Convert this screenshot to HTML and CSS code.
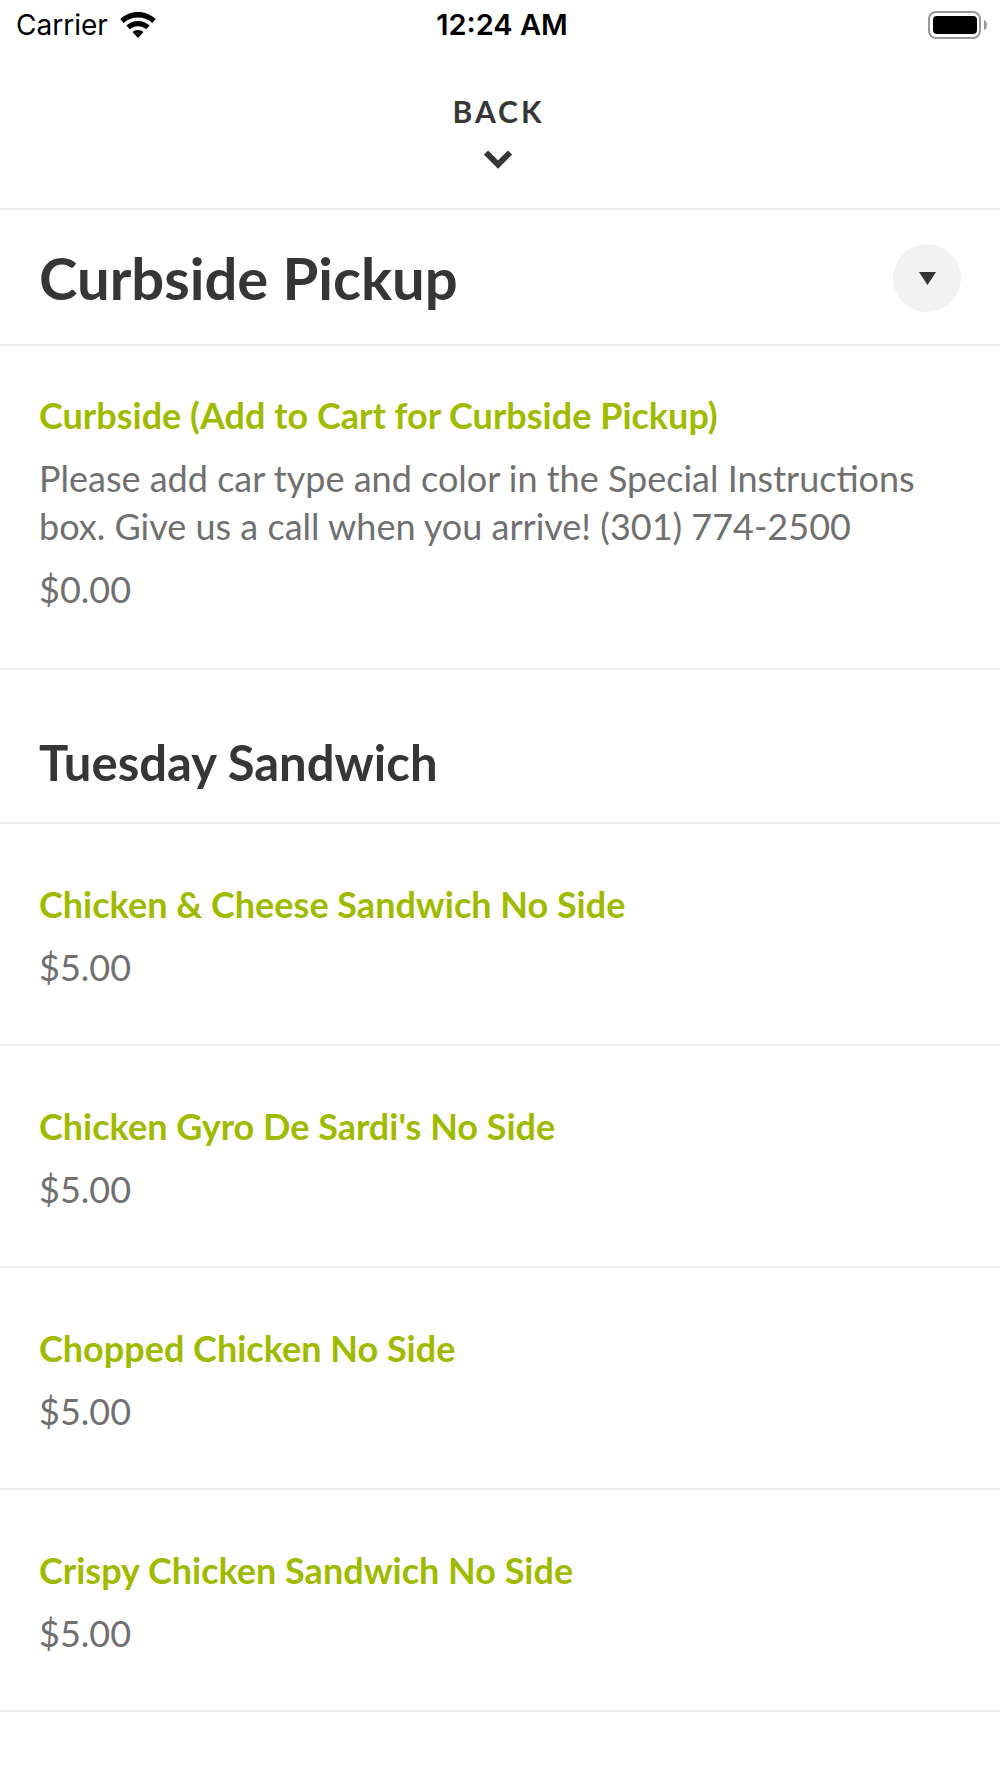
FILE: index.html
```html
<!DOCTYPE html>
<html lang="en">
<head>
<meta charset="utf-8">
<meta name="viewport" content="width=device-width, initial-scale=1">
<title>Menu</title>
<link rel="stylesheet" href="styles.css">
</head>
<body>
<div class="status">
  <div class="carrier"><span>Carrier</span>
    <svg class="wifi" viewBox="0 0 36 26" aria-hidden="true"><path d="M18 0C24.900 0 31.200 2.700 35.700 7.100L32.300 10.900C28.600 7.500 23.600 5.600 18 5.600S7.400 7.500 3.700 10.900L.3 7.100C4.800 2.700 11.100 0 18 0Z"/><path d="M18 8.900C22.500 8.900 26.600 10.600 29.700 13.500L26.200 17.200C24 15.400 21.200 14.300 18 14.300S12 15.400 9.800 17.200L6.300 13.500C9.400 10.600 13.500 8.900 18 8.900Z"/><path d="M18 18C20.200 18 22.100 18.700 23.500 20L18 26L12.500 20C13.900 18.700 15.800 18 18 18Z"/></svg>
  </div>
  <time class="clock">12:24 AM</time>
  <svg class="battery" viewBox="0 0 60 28" aria-hidden="true"><rect x="1" y="1" width="51" height="26" rx="7" fill="none" stroke="#999" stroke-width="2"/><rect x="5" y="5" width="44" height="18" rx="4"/><path d="M56 9C60 10.500 60 17.500 56 19Z" fill="#999"/></svg>
</div>
<header class="topbar">
  <button class="back" type="button"><span>BACK</span>
    <svg class="chevron" viewBox="0 0 28 19" aria-hidden="true"><path d="M2 2.500L14 14.500L26 2.500" fill="none" stroke="#363636" stroke-width="6"/></svg>
  </button>
</header>
<main>
  <section>
    <div class="category">
      <h1>Curbside Pickup</h1>
      <button class="toggle" type="button" aria-label="Choose a category"><svg viewBox="0 0 18 13" aria-hidden="true"><path d="M1 0H18L9.500 13Z" fill="#363636"/></svg></button>
    </div>
    <article class="item featured">
      <h3><a href="#curbside">Curbside (Add to Cart for Curbside Pickup)</a></h3>
      <p>Please add car type and color in the Special Instructions box. Give us a call when you arrive! (301) 774-2500</p>
      <p>$0.00</p>
    </article>
  </section>
  <section>
    <h2>Tuesday Sandwich</h2>
    <article class="item"><h3><a href="#cheese">Chicken &amp; Cheese Sandwich No Side</a></h3><p>$5.00</p></article>
    <article class="item"><h3><a href="#gyro">Chicken Gyro De Sardi's No Side</a></h3><p>$5.00</p></article>
    <article class="item"><h3><a href="#chopped">Chopped Chicken No Side</a></h3><p>$5.00</p></article>
    <article class="item"><h3><a href="#crispy">Crispy Chicken Sandwich No Side</a></h3><p>$5.00</p></article>
  </section>
</main>
</body>
</html>
```
FILE: styles.css
```css
* { box-sizing: border-box; }
body { margin: 0; background: #fff; color: #363636; font-family: Lato, sans-serif; }
h1, h2, h3, p { margin: 0; }
button { border: 0; padding: 0; color: inherit; font: inherit; cursor: pointer; }
.status { display: grid; grid-template-columns: 1fr auto 1fr; align-items: center; min-height: 50px; padding: 0 12px 0 16px; color: #000; font: 28px/32px Inter, sans-serif; }
.carrier { display: flex; align-items: center; gap: 12px; }
.wifi { width: 36px; height: 26px; }
.clock { font-size: 29px; font-weight: 600; }
.battery { width: 60px; height: 28px; justify-self: end; }
.topbar { display: flex; justify-content: center; padding: 43px 3px 39px 0; border-bottom: 2px solid #eee; }
.back { display: flex; flex-direction: column; align-items: center; gap: 21px; background: none; font-size: 30px; line-height: 36px; font-weight: 700; letter-spacing: 3px; }
.chevron { width: 28px; height: 19px; }
.category { display: flex; align-items: center; justify-content: space-between; min-height: 136px; padding: 2px 39px 0; border-bottom: 2px solid #eee; }
h1 { font-size: 58px; line-height: 70px; font-weight: 700; }
.toggle { display: grid; place-items: center; width: 68px; height: 68px; border-radius: 50%; background: #f2f2f2; }
.toggle svg { width: 18px; height: 13px; }
h2 { padding: 61px 39px 29px; border-bottom: 2px solid #eee; font-size: 49px; line-height: 62px; font-weight: 700; }
.item { display: grid; gap: 15px; padding: 56px 39px 53px; border-bottom: 2px solid #eee; font-size: 36px; line-height: 48px; color: #707070; }
.item.featured { padding: 45px 39px 55px; }
h3 { font-size: 36px; line-height: 48px; font-weight: 700; }
h3 a { color: #9fbb00; text-decoration: none; }
```
